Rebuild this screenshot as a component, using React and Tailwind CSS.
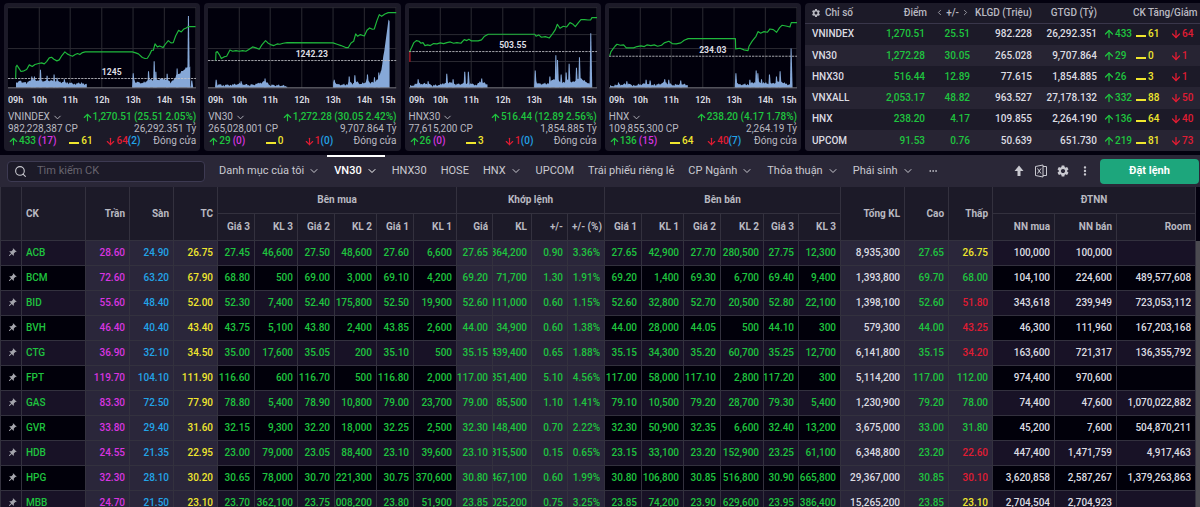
import React from 'react';
import { ArrowUp, ArrowDown, ChevronDown, ChevronLeft, ChevronRight, Search, Ellipsis } from 'lucide-react';
import { MdSettings, MdMoreVert, MdPushPin } from 'react-icons/md';

const TEXT_COLORS = {
  up: 'text-[#1fc43f]',
  down: 'text-[#e01c33]',
  ref: 'text-[#f0e62e]',
  ceil: 'text-[#d935e0]',
  floor: 'text-[#22a4e8]',
  plain: 'text-[#dcdce2]',
};

const CHARTS = [
  {
    name: 'VNINDEX',
    refLabel: '1245',
    refY: 235,
    labelY: 224,
    hLines: [145],
    price:
      '47,235 48,200 51,195 56,203 63,214 72,212 80,208 88,194 97,199 105,193 116,190 125,188 133,191 140,184 148,173 155,171 162,177 171,182 178,179 186,166 195,155 202,161 210,165 218,168 226,163 233,160 240,163 248,157 256,155 398,155 408,158 416,161 428,172 436,175 443,174 450,163 456,150 461,150 466,131 473,140 480,137 490,142 497,132 506,121 514,128 521,127 528,107 537,90 545,95 553,86 560,83 566,79 588,79',
    volume: [
      [[48, 16], [60, 20], [80, 14], [98, 26], [120, 20], [150, 22], [175, 18], [200, 16], [225, 12], [245, 14], [261, 10]],
      [[400, 34], [406, 18], [430, 14], [446, 24], [470, 24], [495, 28], [515, 16], [530, 36], [550, 52], [566, 64], [572, 64]],
      [[573, 4], [579, 4]],
    ],
    spikes: [[96, 34], [104, 34], [122, 54], [142, 36], [163, 40], [172, 30], [194, 26], [401, 44], [447, 50], [464, 80], [469, 48], [503, 42], [533, 58], [567, 216], [577, 22]],
    change: '1,270.51 (25.51 2.05%)',
    qty: '982,228,387 CP',
    value: '26,292.351 Tỷ',
    up: '433',
    ceil: '(17)',
    same: '61',
    down: '64',
    floor: '(2)',
  },
  {
    name: 'VN30',
    refLabel: '1242.23',
    refY: 181,
    labelY: 171,
    hLines: [145],
    price:
      '47,180 48,156 52,154 58,163 64,175 72,170 80,168 90,149 98,153 108,151 118,153 128,151 138,153 148,147 158,140 168,143 178,147 186,134 197,121 204,128 212,133 222,136 232,131 240,132 250,129 262,127 400,128 412,132 424,136 438,142 446,142 454,128 462,123 468,101 474,108 482,103 494,107 502,90 510,83 518,87 524,86 532,61 539,43 546,48 556,41 566,37 590,37',
    volume: [
      [[48, 10], [70, 8], [95, 9], [120, 12], [150, 8], [175, 12], [195, 20], [210, 8], [240, 7], [262, 5]],
      [[401, 20], [412, 10], [440, 9], [450, 20], [458, 12], [468, 20], [480, 12], [495, 14], [503, 28], [512, 14], [525, 18], [535, 28], [545, 50], [567, 204], [570, 200]],
    ],
    spikes: [[49, 24], [124, 20], [196, 28], [404, 24], [449, 34], [466, 38], [504, 40], [525, 32], [538, 46]],
    change: '1,272.28 (30.05 2.42%)',
    qty: '265,028,001 CP',
    value: '9,707.864 Tỷ',
    up: '29',
    ceil: '(0)',
    same: '0',
    down: '1',
    floor: '(0)',
  },
  {
    name: 'HNX30',
    refLabel: '503.55',
    refY: 154,
    labelY: 144,
    hLines: [103, 184],
    openDrop: true,
    price:
      '26,154 32,142 38,128 46,121 54,123 60,129 66,127 72,136 80,134 88,136 98,130 108,131 118,128 128,130 138,127 148,125 158,129 168,127 180,129 190,118 198,121 204,117 212,122 222,122 232,122 242,119 250,109 262,102 402,102 406,108 414,104 422,111 434,109 446,113 456,100 464,88 470,72 478,84 488,78 498,80 508,67 516,71 524,79 534,66 541,58 552,58 562,59 570,59 574,52 590,52',
    volume: [
      [[27, 5], [50, 12], [80, 12], [95, 7], [120, 9], [140, 18], [165, 10], [200, 14], [225, 9], [240, 18], [260, 10]],
      [[403, 24], [412, 12], [440, 12], [450, 22], [470, 26], [485, 14], [500, 24], [515, 16], [540, 30], [560, 14], [570, 10], [573, 0]],
    ],
    spikes: [[52, 26], [82, 20], [138, 42], [157, 26], [192, 48], [203, 48], [243, 28], [404, 52], [448, 34], [466, 98], [471, 84], [482, 40], [497, 46], [506, 72], [528, 60], [537, 92], [571, 164]],
    change: '516.44 (12.89 2.56%)',
    qty: '77,615,200 CP',
    value: '1,854.885 Tỷ',
    up: '26',
    ceil: '(0)',
    same: '3',
    down: '1',
    floor: '(0)',
  },
  {
    name: 'HNX',
    refLabel: '234.03',
    refY: 168,
    labelY: 159,
    hLines: [145],
    price:
      '26,167 30,154 36,146 42,138 48,132 58,135 68,134 76,143 88,143 98,143 108,139 120,137 130,139 138,134 150,136 160,134 170,138 182,135 190,128 204,123 214,130 226,131 240,128 250,120 262,115 404,115 405,146 418,144 430,149 442,151 445,138 455,122 466,108 472,94 480,99 490,94 500,96 508,86 518,88 528,96 537,82 544,75 556,77 568,80 572,67 590,67',
    volume: [
      [[27, 5], [50, 8], [80, 12], [100, 7], [130, 12], [165, 8], [190, 16], [220, 8], [240, 12], [261, 8]],
      [[405, 16], [412, 10], [440, 10], [465, 18], [490, 14], [515, 12], [540, 20], [555, 12], [572, 8], [574, 0]],
    ],
    spikes: [[53, 16], [78, 20], [136, 24], [148, 22], [192, 26], [204, 24], [240, 22], [406, 44], [448, 24], [467, 52], [472, 44], [483, 26], [507, 40], [528, 34], [539, 50], [572, 118]],
    change: '238.20 (4.17 1.78%)',
    qty: '109,855,300 CP',
    value: '2,264.19 Tỷ',
    up: '136',
    ceil: '(15)',
    same: '64',
    down: '40',
    floor: '(7)',
  },
];

const HOURS = [
  ['09h', 24, 'start'],
  ['10h', 118, 'middle'],
  ['11h', 211, 'middle'],
  ['12h', 306, 'middle'],
  ['13h', 400, 'middle'],
  ['14h', 494, 'middle'],
  ['15h', 588, 'end'],
];

const INDEXES = [
  ['VNINDEX', '1,270.51', '25.51', '982.228', '26,292.351', '433', '61', '64'],
  ['VN30', '1,272.28', '30.05', '265.028', '9,707.864', '29', '0', '1'],
  ['HNX30', '516.44', '12.89', '77.615', '1,854.885', '26', '3', '1'],
  ['VNXALL', '2,053.17', '48.82', '963.527', '27,178.132', '332', '88', '50'],
  ['HNX', '238.20', '4.17', '109.855', '2,264.190', '136', '64', '40'],
  ['UPCOM', '91.53', '0.76', '50.639', '651.730', '219', '81', '73'],
];

const TABS = [
  { label: 'Danh mục của tôi', menu: true },
  { label: 'VN30', menu: true, active: true },
  { label: 'HNX30' },
  { label: 'HOSE' },
  { label: 'HNX', menu: true },
  { label: 'UPCOM' },
  { label: 'Trái phiếu riêng lẻ' },
  { label: 'CP Ngành', menu: true },
  { label: 'Thỏa thuận', menu: true },
  { label: 'Phái sinh', menu: true },
];

const COL_WIDTHS = [
  'w-[21px]', 'w-[64px]', 'w-[44px]', 'w-[44px]', 'w-[44px]',
  'w-[37px]', 'w-[43px]', 'w-[37px]', 'w-[42px]', 'w-[37px]', 'w-[43px]',
  'w-[36px]', 'w-[39px]', 'w-[36px]', 'w-[37px]',
  'w-[37px]', 'w-[42px]', 'w-[37px]', 'w-[43px]', 'w-[35px]', 'w-[42px]',
  'w-[64px]', 'w-[44px]', 'w-[44px]',
  'w-[62px]', 'w-[62px]', 'w-[79px]',
];

// columns with the lighter background, counted after the symbol
const LIGHT_COLS = [0, 1, 2, 9, 10, 11, 12, 19, 20, 21];

// symbol, color of the lowest price, then the values from left to right
const STOCKS = [
  ['ACB', 'ref', '28.60 24.90 26.75 27.45 46,600 27.50 48,600 27.60 6,600 27.65 364,200 0.90 3.36% 27.65 42,900 27.70 280,500 27.75 12,300 8,935,300 27.65 26.75 100,000 100,000'],
  ['BCM', 'up', '72.60 63.20 67.90 68.80 500 69.00 3,000 69.10 4,200 69.20 71,700 1.30 1.91% 69.20 1,400 69.30 6,700 69.40 9,400 1,393,800 69.70 68.00 104,100 224,600 489,577,608'],
  ['BID', 'down', '55.60 48.40 52.00 52.30 7,400 52.40 175,800 52.50 19,900 52.60 111,000 0.60 1.15% 52.60 32,800 52.70 20,500 52.80 22,100 1,398,100 52.60 51.80 343,618 239,949 723,053,112'],
  ['BVH', 'down', '46.40 40.40 43.40 43.75 5,100 43.80 2,400 43.85 2,600 44.00 34,900 0.60 1.38% 44.00 28,000 44.05 500 44.10 300 579,300 44.00 43.25 46,300 111,960 167,203,168'],
  ['CTG', 'down', '36.90 32.10 34.50 35.00 17,600 35.05 200 35.10 500 35.15 439,400 0.65 1.88% 35.15 34,300 35.20 60,700 35.25 12,700 6,141,800 35.15 34.20 163,600 721,317 136,355,792'],
  ['FPT', 'up', '119.70 104.10 111.90 116.60 600 116.70 500 116.80 2,000 117.00 351,400 5.10 4.56% 117.00 58,000 117.10 2,800 117.20 300 5,114,200 117.00 112.00 974,400 970,600'],
  ['GAS', 'up', '83.30 72.50 77.90 78.80 5,400 78.90 10,800 79.00 23,700 79.00 85,500 1.10 1.41% 79.10 10,500 79.20 28,700 79.30 5,400 1,230,900 79.20 78.00 74,400 47,600 1,070,022,882'],
  ['GVR', 'up', '33.80 29.40 31.60 32.15 9,300 32.20 18,000 32.25 2,500 32.30 148,400 0.70 2.22% 32.30 50,900 32.35 6,600 32.40 13,200 3,675,000 33.00 31.80 45,200 7,600 504,870,211'],
  ['HDB', 'down', '24.55 21.35 22.95 23.00 79,000 23.05 88,400 23.10 39,600 23.10 315,500 0.15 0.65% 23.15 33,100 23.20 152,900 23.25 61,100 6,348,800 23.20 22.60 447,400 1,471,759 4,917,463'],
  ['HPG', 'down', '32.30 28.10 30.20 30.65 78,000 30.70 221,300 30.75 370,600 30.80 467,100 0.60 1.99% 30.80 106,800 30.85 516,800 30.90 665,800 29,367,000 30.85 30.10 3,620,858 2,587,267 1,379,263,863'],
  ['MBB', 'ref', '24.70 21.50 23.10 23.70 362,100 23.75 ,008,200 23.80 51,900 23.85 025,200 0.75 3.25% 23.85 74,200 23.90 629,600 23.95 386,400 15,265,200 23.85 23.10 2,704,504 2,704,923'],
];

const BASE_Y = 263;

const volumePath = (segment) => {
  const points = [];
  for (let i = 0; i < segment.length - 1; i++) {
    const [x1, h1] = segment[i];
    const [x2, h2] = segment[i + 1];
    for (let x = x1; x < x2; x += 3) {
      const h = h1 + ((h2 - h1) * (x - x1)) / (x2 - x1);
      const noise = Math.sin(x * 1.7) * 2 + Math.cos(x * 0.9) * 2;
      points.push(`${x},${BASE_Y - Math.max(2, h + noise)}`);
    }
  }
  const [lastX, lastH] = segment[segment.length - 1];
  points.push(`${lastX},${BASE_Y - lastH}`);
  return `${segment[0][0]},${BASE_Y} ${points.join(' ')} ${lastX},${BASE_Y}`;
};

const Flat = () => <span className="inline-block w-2.5 h-0.5 bg-[#f0e62e]" />;

const IndexChart = ({ chart }) => (
  <svg viewBox="24 20 566 292" className="block w-full h-auto" role="img" aria-label={chart.name}>
    <rect x="24" y="20" width="566" height="243" fill="#01000c" />
    <g stroke="#2b2a33" strokeWidth="3">
      <path d="M24 22H590M118 20V263M211 20V263M306 20V263M400 20V263M494 20V263M589 20V263" />
      {chart.hLines.map((y) => (
        <path key={y} d={`M24 ${y}H590`} />
      ))}
    </g>
    <g fill="#86a8d8">
      {chart.volume.map((segment, i) => (
        <polygon key={i} points={volumePath(segment)} />
      ))}
      {chart.spikes.map(([x, h]) => (
        <polygon key={x} points={`${x - 4},${BASE_Y} ${x - 2},${BASE_Y - h} ${x + 1},${BASE_Y - h} ${x + 4},${BASE_Y}`} />
      ))}
    </g>
    {chart.openDrop && <rect x="24" y="154" width="5" height="31" fill="#8e1522" />}
    <path d="M24 263H590" stroke="#77767e" strokeWidth="3" />
    <path d={`M24 ${chart.refY}H590`} stroke="#c6c6cc" strokeWidth="2.5" strokeDasharray="7 3" />
    <polyline points={chart.price} fill="none" stroke="#1fb83c" strokeWidth="3.5" strokeLinejoin="round" />
    <g fill="#dcdce2" fontWeight="700">
      <text x="336" y={chart.labelY} fontSize="26" textAnchor="middle">{chart.refLabel}</text>
      {HOURS.map(([label, x, anchor]) => (
        <text key={label} x={x} y="310" fontSize="27" fontWeight="600" textAnchor={anchor}>{label}</text>
      ))}
    </g>
  </svg>
);

const IndexCard = ({ chart }) => (
  <article className="flex-1 min-w-0 p-1 rounded bg-[#1c1a28] leading-3 text-[#b9b9c1]">
    <IndexChart chart={chart} />
    <div className="flex justify-between mt-[7px]">
      <button className="flex items-center gap-0.5">
        {chart.name}
        <ChevronDown size={11} />
      </button>
      <span className={`flex items-center font-medium ${TEXT_COLORS.up}`}>
        <ArrowUp size={11} strokeWidth={2.5} />
        {chart.change}
      </span>
    </div>
    <div className="flex justify-between">
      <span>{chart.qty}</span>
      <span>{chart.value}</span>
    </div>
    <div className="flex justify-between font-medium">
      <span className="flex items-center gap-0.5">
        <span className={`flex items-center ${TEXT_COLORS.up}`}>
          <ArrowUp size={11} strokeWidth={2.5} />
          {chart.up}
        </span>
        <span className={TEXT_COLORS.ceil}>{chart.ceil}</span>
      </span>
      <span className={`flex items-baseline gap-0.5 ${TEXT_COLORS.ref}`}>
        <Flat />
        {chart.same}
      </span>
      <span className="flex items-center">
        <span className={`flex items-center ${TEXT_COLORS.down}`}>
          <ArrowDown size={11} strokeWidth={2.5} />
          {chart.down}
        </span>
        <span className={TEXT_COLORS.floor}>{chart.floor}</span>
      </span>
      <span className="font-normal">Đóng cửa</span>
    </div>
  </article>
);

const IndexTable = () => (
  <section className="w-[395px] shrink-0 overflow-hidden rounded-l bg-[#1c1a28]">
    <table className="w-full h-full table-fixed border-collapse whitespace-nowrap font-medium">
      <colgroup>
        <col className="w-[70px]" />
        <col className="w-[52px]" />
        <col className="w-[43px]" />
        <col className="w-[62px]" />
        <col className="w-[65px]" />
        <col className="w-[39px]" />
        <col className="w-[34px]" />
        <col className="w-[30px]" />
      </colgroup>
      <thead>
        <tr className="h-5 border-b border-[#39364a] text-[#b9b9c1]">
          <th className="pl-1.5 font-medium text-left">
            <button className="flex items-center gap-1">
              <MdSettings size={10} />
              Chỉ số
            </button>
          </th>
          <th className="font-medium text-right">Điểm</th>
          <th className="font-medium">
            <span className="flex items-center justify-end gap-0.5">
              <button aria-label="Trước"><ChevronLeft size={9} /></button>
              +/-
              <button aria-label="Sau"><ChevronRight size={9} /></button>
            </span>
          </th>
          <th className="font-medium text-right">KLGD (Triệu)</th>
          <th className="font-medium text-right">GTGD (Tỷ)</th>
          <th colSpan={3} className="pl-9 font-medium text-left">CK Tăng/Giảm</th>
        </tr>
      </thead>
      <tbody>
        {INDEXES.map(([name, point, change, qty, value, up, same, down]) => (
          <tr key={name} className="even:bg-[#272433]">
            <td className={`pl-[7px] ${TEXT_COLORS.plain}`}>{name}</td>
            <td className={`pr-0.5 text-right ${TEXT_COLORS.up}`}>{point}</td>
            <td className={`text-right ${TEXT_COLORS.up}`}>{change}</td>
            <td className={`text-right ${TEXT_COLORS.plain}`}>{qty}</td>
            <td className={`text-right ${TEXT_COLORS.plain}`}>{value}</td>
            <td className={`pl-1.5 ${TEXT_COLORS.up}`}>
              <span className="flex items-center"><ArrowUp size={12} strokeWidth={2.5} />{up}</span>
            </td>
            <td className={TEXT_COLORS.ref}>
              <span className="flex items-baseline gap-0.5"><Flat />{same}</span>
            </td>
            <td className={TEXT_COLORS.down}>
              <span className="flex items-center"><ArrowDown size={12} strokeWidth={2.5} />{down}</span>
            </td>
          </tr>
        ))}
      </tbody>
    </table>
  </section>
);

const ExcelIcon = () => (
  <svg width="14" height="14" viewBox="0 0 14 14" fill="none" stroke="currentColor">
    <path d="M1.500 2.500 9 1v12L1.500 11.500z" />
    <path d="M9 2.500h3.500v9H9M3.500 4.500l3.500 5M7 4.500l-3.500 5" />
  </svg>
);

const SolidArrowUp = () => (
  <svg width="14" height="14" viewBox="0 0 14 14" fill="currentColor">
    <path d="M7 1.500 11.500 7H8.500v5h-3V7h-3z" />
  </svg>
);

const Toolbar = () => (
  <nav className="flex items-center shrink-0 mt-1 h-8 pl-[7px] bg-[#2a2737] text-[11px] text-[#c9c9d0]">
    <label className="flex items-center w-[198px] h-[21px] px-1.5 gap-2.5 rounded-sm border border-[#3d3a52] bg-[#1c1a28]">
      <Search size={13} className="shrink-0" />
      <input
        type="text"
        aria-label="Tìm kiếm CK"
        placeholder="Tìm kiếm CK"
        className="w-full min-w-0 bg-transparent outline-none placeholder:text-[#67646f]"
      />
    </label>
    <div className="flex h-full pl-[7px]">
      {TABS.map((tab) => (
        <button
          key={tab.label}
          className={`flex items-center gap-1 px-[7px] border-y-2 border-transparent whitespace-nowrap ${
            tab.active ? 'border-t-white text-white font-medium' : ''
          }`}
        >
          {tab.label}
          {tab.menu && <ChevronDown size={12} />}
        </button>
      ))}
      <button aria-label="Thêm" className="px-[7px]">
        <Ellipsis size={10} />
      </button>
    </div>
    <div className="flex items-center h-full gap-2 ml-auto pr-px">
      <button aria-label="Thu gọn"><SolidArrowUp /></button>
      <button aria-label="Xuất Excel"><ExcelIcon /></button>
      <button aria-label="Cài đặt"><MdSettings size={14} /></button>
      <button aria-label="Tùy chọn"><MdMoreVert size={14} /></button>
      <button className="w-[99px] h-[25px] rounded-sm bg-[#1da67c] text-white font-bold">Đặt lệnh</button>
    </div>
  </nav>
);

const cellColor = (index, lowColor) => {
  if (index === 0) return TEXT_COLORS.ceil;
  if (index === 1) return TEXT_COLORS.floor;
  if (index === 2) return TEXT_COLORS.ref;
  if (index === 19 || index > 21) return TEXT_COLORS.plain;
  if (index === 21) return TEXT_COLORS[lowColor];
  return TEXT_COLORS.up;
};

const Th = ({ children, className = 'text-right', ...props }) => (
  <th className={`px-1 border-r border-b border-[#33313e] font-bold ${className}`} {...props}>
    {children}
  </th>
);

const PriceBoard = () => (
  <main className="flex flex-1 min-h-0 overflow-hidden border-l border-[#33313e]">
    <div className="flex-1 min-w-0">
      <table className="w-full table-fixed border-separate border-spacing-0 whitespace-nowrap">
        <colgroup>
          {COL_WIDTHS.map((width, i) => (
            <col key={i} className={width} />
          ))}
        </colgroup>
        <thead className="bg-[#1c1a28] text-[#b9b9c1]">
          <tr className="h-[27px]">
            <Th rowSpan={2} aria-label="Ghim" />
            <Th rowSpan={2} className="text-left">CK</Th>
            <Th rowSpan={2}>Trần</Th>
            <Th rowSpan={2}>Sàn</Th>
            <Th rowSpan={2}>TC</Th>
            <Th colSpan={6} className="text-center">Bên mua</Th>
            <Th colSpan={4} className="text-center">Khớp lệnh</Th>
            <Th colSpan={6} className="text-center">Bên bán</Th>
            <Th rowSpan={2}>Tổng KL</Th>
            <Th rowSpan={2}>Cao</Th>
            <Th rowSpan={2}>Thấp</Th>
            <Th colSpan={3} className="text-center">ĐTNN</Th>
          </tr>
          <tr className="h-[27px]">
            {['Giá 3', 'KL 3', 'Giá 2', 'KL 2', 'Giá 1', 'KL 1', 'Giá', 'KL', '+/-', '+/- (%)', 'Giá 1 ', 'KL 1 ', 'Giá 2 ', 'KL 2 ', 'Giá 3 ', 'KL 3 ', 'NN mua', 'NN bán', 'Room'].map((label) => (
              <Th key={label}>{label}</Th>
            ))}
          </tr>
        </thead>
        <tbody>
          {STOCKS.map(([symbol, lowColor, values]) => {
            const cells = values.split(' ');
            if (cells.length < 25) cells.push('');
            return (
              <tr key={symbol} className="h-[25px] bg-[#181226] even:bg-[#01000a] font-medium">
                <td className="pl-1.5 border-r border-b border-[#33313e] text-[#a5a5ad]">
                  <button aria-label={`Ghim ${symbol}`} className="block rotate-45">
                    <MdPushPin size={10} />
                  </button>
                </td>
                <td className={`px-1 border-r border-b border-[#33313e] ${TEXT_COLORS.up}`}>{symbol}</td>
                {cells.map((value, i) => (
                  <td
                    key={i}
                    className={`pr-1 border-r border-b border-[#33313e] ${cellColor(i, lowColor)} ${
                      LIGHT_COLS.includes(i) ? 'bg-[#2a263a]' : ''
                    }`}
                  >
                    <div className="flex justify-end overflow-hidden">{value}</div>
                  </td>
                ))}
              </tr>
            );
          })}
        </tbody>
      </table>
    </div>
    <div className="w-1 mt-[54px] bg-[#4b4a50]" />
  </main>
);

export default function App() {
  return (
    <div className="flex flex-col h-screen overflow-hidden bg-[#03010f] font-[Roboto,sans-serif] text-[10px] leading-3">
      <header className="flex shrink-0 gap-1 pt-[3px] pl-1">
        {CHARTS.map((chart) => (
          <IndexCard key={chart.name} chart={chart} />
        ))}
        <IndexTable />
      </header>
      <Toolbar />
      <PriceBoard />
    </div>
  );
}
